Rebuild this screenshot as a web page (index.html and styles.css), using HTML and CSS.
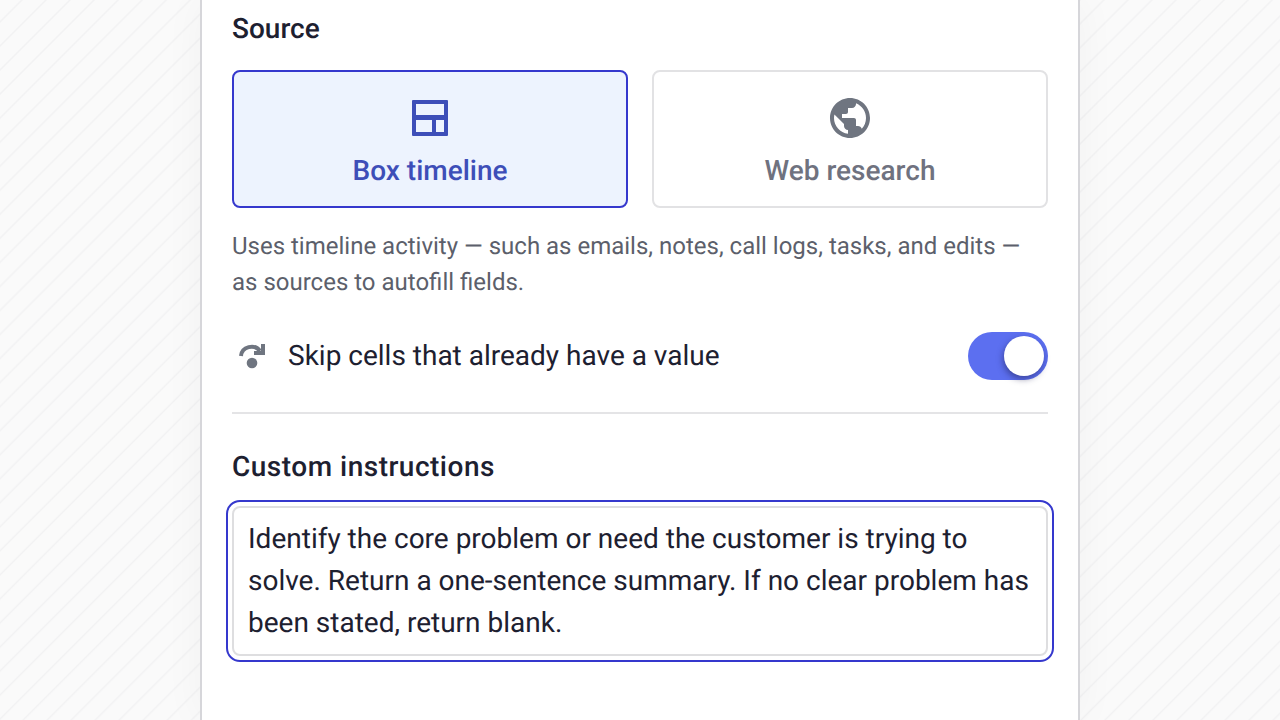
FILE: index.html
```html
<!DOCTYPE html>
<html lang="en">
<head>
<meta charset="utf-8">
<title>Autofill settings</title>
<link rel="stylesheet" href="styles.css">
</head>
<body>
<main class="panel">
  <h2 class="heading">Source</h2>
  <div class="cards">
    <div class="card card-active">
      <svg class="card-icon" viewBox="0 0 48 48"><path fill-rule="evenodd" d="M7 6h34a1 1 0 0 1 1 1v34a1 1 0 0 1-1 1H7a1 1 0 0 1-1-1V7a1 1 0 0 1 1-1zm3 4v11h28V10zm0 16v12h16V26zm20 0v12h8V26z"/></svg>
      <span class="card-label">Box timeline</span>
    </div>
    <div class="card">
      <svg class="card-icon" viewBox="0 0 24 24"><path d="M12 2C6.48 2 2 6.48 2 12s4.48 10 10 10 10-4.48 10-10S17.52 2 12 2zm-1 17.93c-3.95-.49-7-3.85-7-7.93 0-.62.08-1.21.21-1.79L9 15v1c0 1.1.9 2 2 2v1.93zm6.9-2.54c-.26-.81-1-1.39-1.9-1.39h-1v-3c0-.55-.45-1-1-1H8v-2h2c.55 0 1-.45 1-1V7h2c1.1 0 2-.9 2-2v-.41c2.93 1.19 5 4.06 5 7.41 0 2.08-.8 3.97-2.1 5.39z"/></svg>
      <span class="card-label">Web research</span>
    </div>
  </div>
  <p class="description">Uses timeline activity — such as emails, notes, call logs, tasks, and edits — as sources to autofill fields.</p>
  <div class="skip-row">
    <svg class="skip-icon" viewBox="0 0 40 40"><path d="M9 20A10.500 10 0 0 1 28 15" fill="none" stroke-width="4"/><path d="M29 8h4v11H22v-4h7z"/><circle cx="20" cy="27" r="5.300"/></svg>
    <span class="skip-label">Skip cells that already have a value</span>
    <span class="toggle"><span class="knob"></span></span>
  </div>
  <hr class="divider">
  <h2 class="heading heading-custom">Custom instructions</h2>
  <div class="textarea">Identify the core problem or need the customer is trying to solve. Return a one-sentence summary. If no clear problem has been stated, return blank.</div>
</main>
</body>
</html>
```
FILE: styles.css
```css
* { box-sizing: border-box; }
html, body { height: 100%; }
body {
  margin: 0;
  overflow: hidden;
  font-family: Roboto, "Liberation Sans", sans-serif;
  text-rendering: geometricPrecision;
  color: #1d2030;
  background-color: #fafafa;
  background-image: repeating-linear-gradient(135deg, #fafafa 0, #fafafa 14px, #f2f2f3 15.500px, #fafafa 17px);
}
.panel {
  width: 880px;
  height: 720px;
  margin: 0 auto;
  padding: 12px 30px 0;
  background: #fff;
  border-left: 2px solid #d6d6da;
  border-right: 2px solid #d6d6da;
  box-shadow: 0 0 40px rgba(0, 0, 0, 0.04);
}
.heading {
  margin: 0;
  font-size: 28px;
  line-height: 34px;
  font-weight: 500;
  color: #1d2030;
}
.cards {
  display: flex;
  gap: 24px;
  margin-top: 24px;
}
.card {
  flex: 1;
  height: 138px;
  display: flex;
  flex-direction: column;
  align-items: center;
  padding-top: 22px;
  border: 2px solid #e2e2e4;
  border-radius: 8px;
  background: #fff;
  color: #6f727f;
}
.card-active {
  border-color: #3538cd;
  background: #edf3fe;
  color: #3d4eb8;
}
.card-icon {
  width: 48px;
  height: 48px;
  fill: #6f7580;
}
.card-active .card-icon { fill: #3d4eb8; }
.card-label {
  margin-top: 9px;
  font-size: 28px;
  line-height: 40px;
  font-weight: 500;
}
.description {
  margin: 20px 0 0;
  font-size: 24px;
  line-height: 36px;
  color: #5c5f6b;
}
.skip-row {
  display: flex;
  align-items: center;
  height: 48px;
  margin-top: 32px;
}
.skip-icon {
  width: 40px;
  height: 40px;
  margin-right: 16px;
  fill: #6f7580;
  stroke: #6f7580;
  stroke-width: 0;
}
.skip-label {
  flex: 1;
  font-size: 28px;
  line-height: 40px;
}
.toggle {
  display: flex;
  justify-content: flex-end;
  align-items: center;
  width: 80px;
  height: 48px;
  padding-right: 4px;
  border-radius: 24px;
  background: #5c6ff0;
}
.knob {
  width: 40px;
  height: 40px;
  border-radius: 50%;
  background: #fff;
  box-shadow: -1px 3px 6px rgba(30, 30, 80, 0.5);
}
.divider {
  height: 2px;
  margin: 32px 0 0;
  border: 0;
  background: #e4e4e6;
}
.heading-custom {
  margin-top: 36px;
  letter-spacing: 0.5px;
}
.textarea {
  height: 150px;
  margin-top: 22px;
  padding: 10px 14px;
  border: 2px solid #dedee0;
  border-radius: 8px;
  outline: 2px solid #3538cd;
  outline-offset: 4px;
  font-size: 28px;
  line-height: 42px;
  color: #1d2030;
}
```
